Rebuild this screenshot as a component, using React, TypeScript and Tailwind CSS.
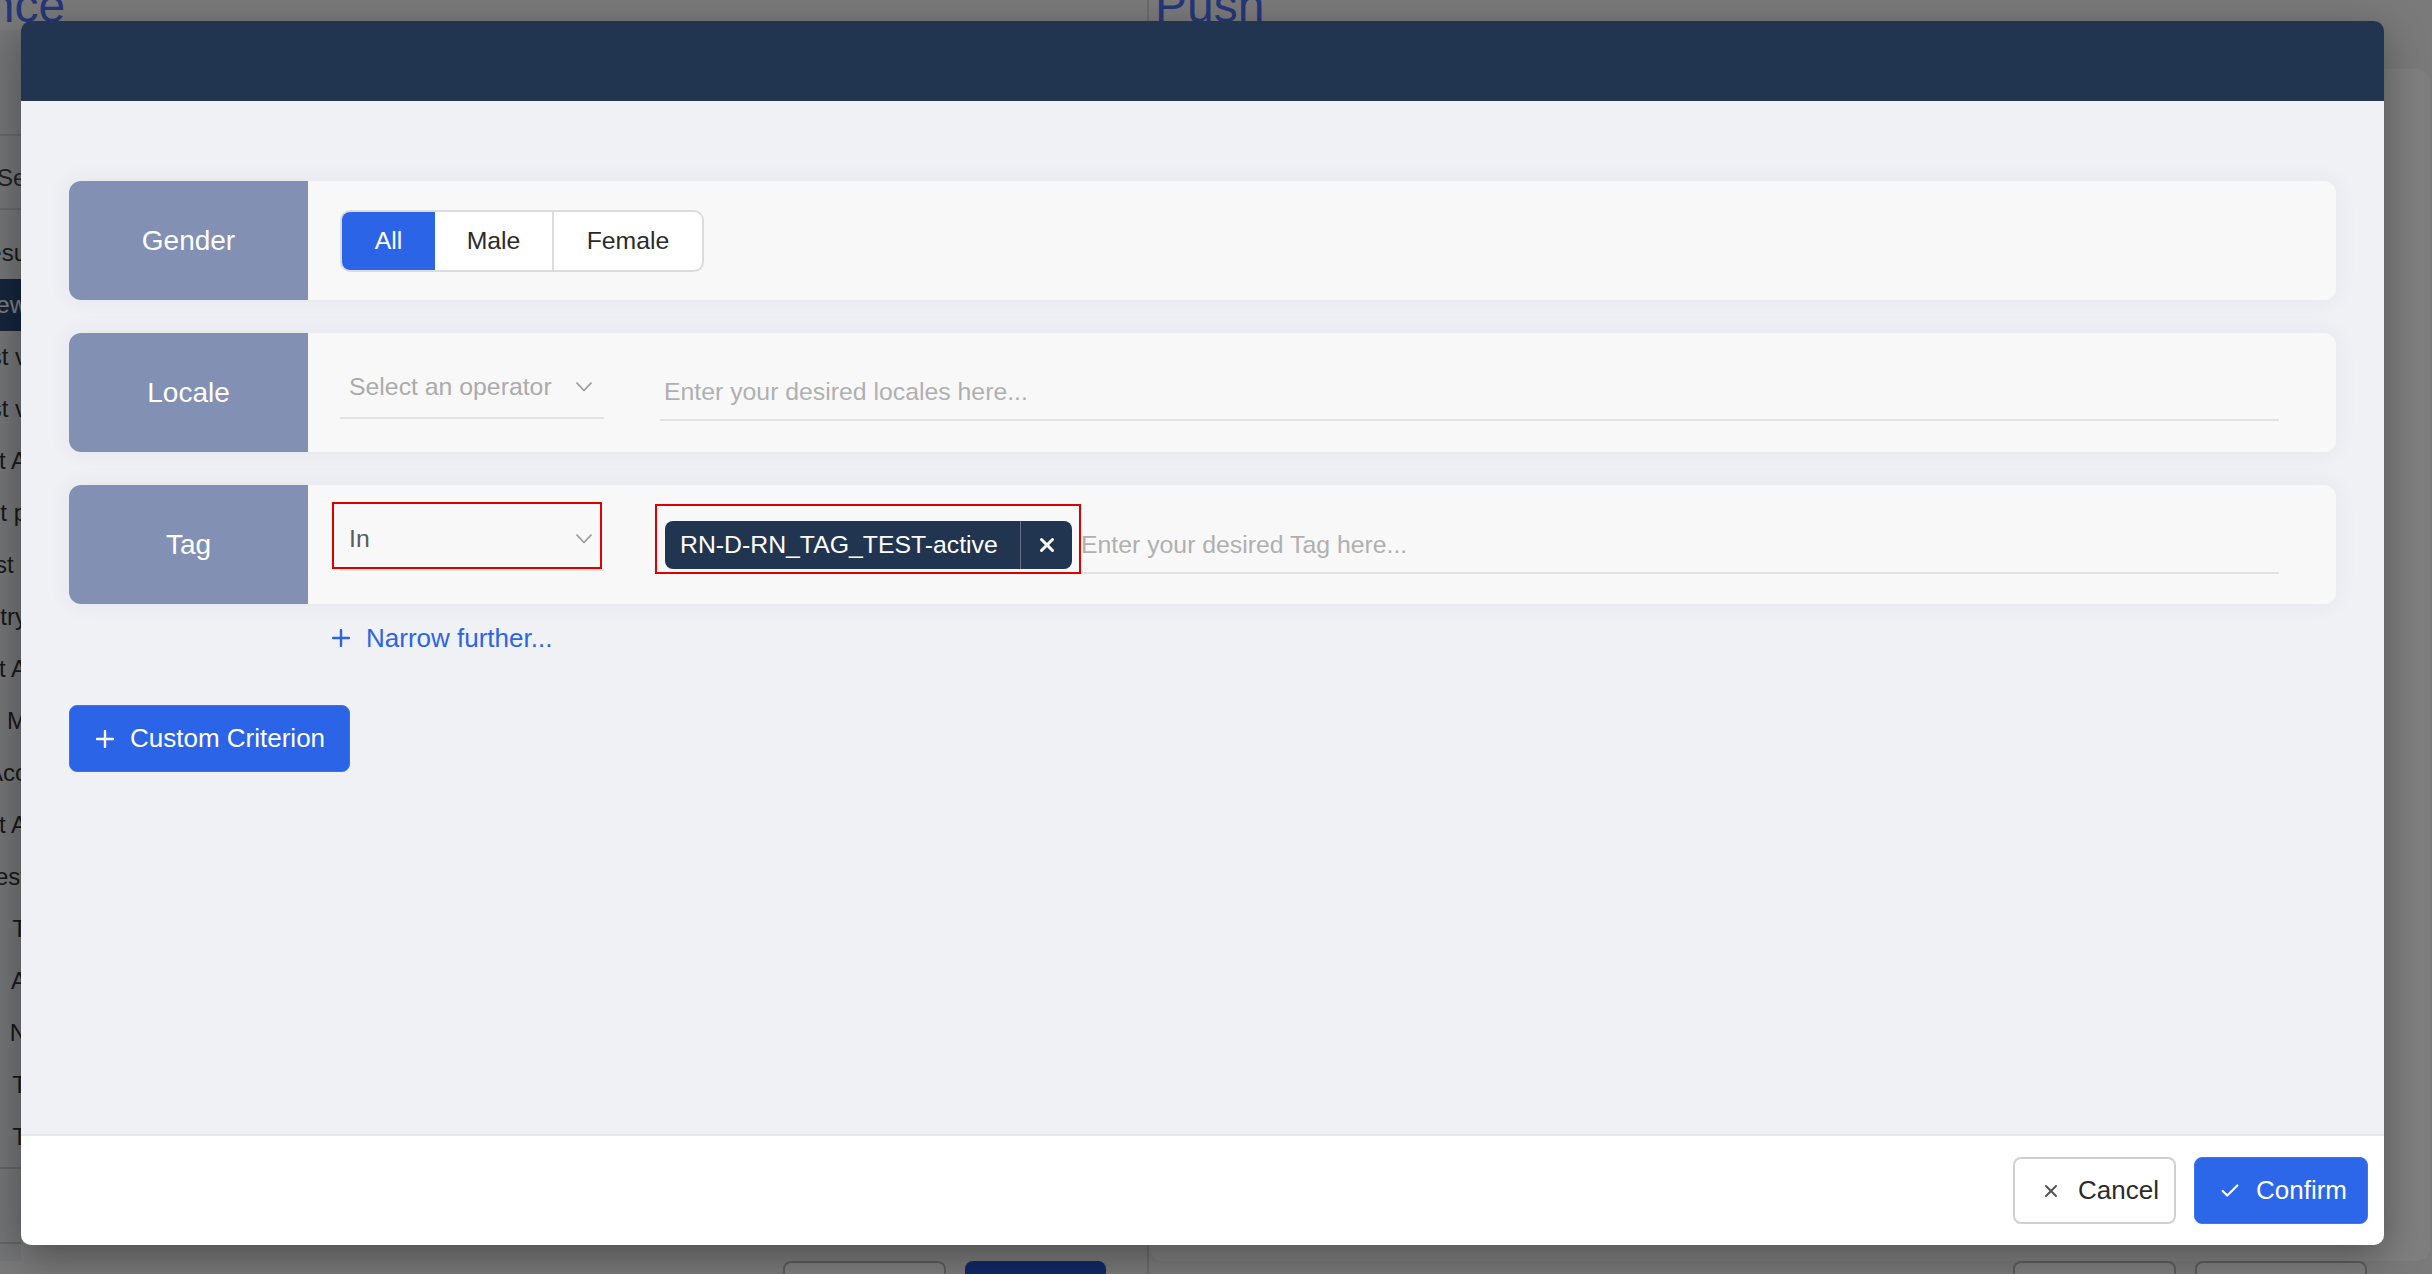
import { Check, X } from "lucide-react";

const sideItems = [
  { text: "Resu", active: false },
  { text: "New", active: true },
  { text: "Test v", active: false },
  { text: "Test v", active: false },
  { text: "Test A", active: false },
  { text: "Test p", active: false },
  { text: "Test I", active: false },
  { text: "Entry", active: false },
  { text: "Test A", active: false },
  { text: "M", active: false },
  { text: "Acc", active: false },
  { text: "Test A", active: false },
  { text: "Test", active: false },
  { text: " T", active: false },
  { text: " A", active: false },
  { text: "N", active: false },
  { text: " T", active: false },
  { text: " T", active: false },
];

function Chevron() {
  return (
    <svg width="16" height="10" viewBox="0 0 16 10" fill="none">
      <path d="M1 1.2l7 7.3 7-7.3" stroke="#9c9c9c" strokeWidth="1.7" strokeLinecap="round" strokeLinejoin="round" />
    </svg>
  );
}

function Plus({ color }: { color: string }) {
  return (
    <svg width="18" height="18" viewBox="0 0 18 18" fill="none">
      <path d="M9 1v16M1 9h16" stroke={color} strokeWidth="2.4" strokeLinecap="round" />
    </svg>
  );
}

function Row({ label, children, center }: { label: string; children: React.ReactNode; center?: boolean }) {
  return (
    <div className="flex h-[119px] overflow-hidden rounded-[12px] bg-[#f8f8f8] shadow-[0_0_24px_rgba(40,50,90,0.06)]">
      <div className="flex w-[239px] shrink-0 items-center justify-center bg-[#8290b3] text-[28px] text-white">
        {label}
      </div>
      <div className={`flex flex-1 pl-[32px] pr-[57px] ${center ? "items-center" : "items-start"}`}>{children}</div>
    </div>
  );
}

function OperatorSelect({ value, marked }: { value?: string; marked?: boolean }) {
  return (
    <div className="relative mt-[23px] flex h-[63px] w-[264px] shrink-0 items-center justify-between border-b-2 border-[#e2e2e2] pl-[9px] pr-[12px]">
      <span className={`text-[24.8px] ${value ? "text-[#5c5c5c]" : "text-[#ababab]"}`}>{value ?? "Select an operator"}</span>
      <Chevron />
      {marked && <div className="pointer-events-none absolute -left-[8px] -top-[6px] h-[67px] w-[270px] border-2 border-[#e00000]" />}
    </div>
  );
}

export default function App() {
  return (
    <div className="relative h-[1274px] w-full overflow-hidden bg-[#f4f5f7] font-['Liberation_Sans',Arial,sans-serif]">
      {/* page behind the dialog */}
      <div className="flex h-full">
        <div className="flex w-[1147px] shrink-0 flex-col">
          <div className="-ml-[135px] -mt-[18px] h-[48px] text-[48px] leading-none text-[#4a6ef5]">Audience</div>
          <div className="flex flex-1">
            <div className="flex w-[21px] shrink-0 flex-col overflow-hidden bg-[#e9eaee] pt-[104px]">
              <div className="h-[76px] border-y-2 border-[#d0d0d0] pt-[24px] text-[24px] text-[#444]">
                <div className="-ml-[3px]">Search</div>
              </div>
              <div className="mt-[17px] flex flex-col">
                {sideItems.map((it, i) => (
                  <div
                    key={i}
                    className={`flex h-[52px] items-center justify-end whitespace-nowrap text-[24px] ${
                      it.active ? "bg-[#2a4a78] text-white" : "text-[#333]"
                    }`}
                  >
                    <span className="-mr-[6px]">{it.text}</span>
                  </div>
                ))}
              </div>
              <div className="mt-[4px] h-[77px] border-y-2 border-[#c8c8c8]" />
            </div>
            <div className="flex-1" />
          </div>
          <div className="flex h-[13px] items-start gap-[19px] pl-[783px]">
            <div className="h-[67px] w-[163px] shrink-0 rounded-[8px] border-2 border-[#bbb] bg-white" />
            <div className="h-[67px] w-[141px] shrink-0 rounded-[8px] bg-[#2552cc]" />
          </div>
        </div>
        <div className="w-[2px] shrink-0 bg-[#d6d6d6]" />
        <div className="flex flex-1 flex-col">
          <div className="-mt-[18px] h-[48px] pl-[6px] text-[48px] leading-none text-[#4a6ef5]">Push</div>
          <div className="mr-[2px] mt-[39px] flex-1 rounded-[14px] bg-white" />
          <div className="flex h-[13px] items-start gap-[19px] pl-[864px]">
            <div className="h-[67px] w-[163px] shrink-0 rounded-[8px] border-2 border-[#bbb] bg-white" />
            <div className="h-[67px] w-[172px] shrink-0 rounded-[8px] border-2 border-[#bbb] bg-white" />
          </div>
        </div>
      </div>

      <div className="absolute inset-0 bg-black/50" />

      {/* dialog */}
      <div className="absolute left-[21px] top-[21px] flex h-[1224px] w-[2363px] flex-col overflow-hidden rounded-[10px] shadow-[0_12px_40px_rgba(0,0,0,0.35)]">
        <div className="h-[80px] shrink-0 bg-[#213550]" />
        <div className="flex flex-1 flex-col bg-[#f0f1f5] px-[48px] pt-[80px]">
          <div className="flex flex-col gap-[33px]">
            <Row label="Gender" center>
              <div className="flex h-[62px] overflow-hidden rounded-[10px] border-2 border-[#dcdcdc] bg-white text-[24.8px] text-[#2b2b2b]">
                <div className="flex w-[93px] items-center justify-center bg-[#2c64e8] text-white">All</div>
                <div className="flex w-[119px] items-center justify-center border-r-2 border-[#dcdcdc]">Male</div>
                <div className="flex w-[148px] items-center justify-center">Female</div>
              </div>
            </Row>
            <Row label="Locale">
              <OperatorSelect />
              <div className="ml-[56px] mt-[31px] flex h-[57px] flex-1 items-center border-b-2 border-[#e2e2e2] pl-[4px] text-[24.8px] text-[#b0b0b0]">
                Enter your desired locales here...
              </div>
            </Row>
            <Row label="Tag">
              <OperatorSelect value="In" marked />
              <div className="relative ml-[56px] mt-[32px] flex h-[57px] flex-1 items-center border-b-2 border-[#e2e2e2] pl-[5px] text-[24.8px]">
                <div className="flex h-[48px] items-center rounded-[8px] bg-[#213550] text-white">
                  <span className="w-[355px] whitespace-nowrap pl-[15px]">RN-D-RN_TAG_TEST-active</span>
                  <span className="flex h-full w-[52px] items-center justify-center border-l border-white/30">
                    <X size={22} strokeWidth={3.2} />
                  </span>
                </div>
                <span className="ml-[9px] text-[#b0b0b0]">Enter your desired Tag here...</span>
                <div className="pointer-events-none absolute -left-[5px] -top-[13px] h-[70px] w-[426px] border-2 border-[#e00000]" />
              </div>
            </Row>
          </div>
          <div className="ml-[263px] mt-[18px] flex h-[32px] items-center gap-[16px] text-[26px] text-[#2c64e8]">
            <Plus color="#2c64e8" />
            <span>Narrow further...</span>
          </div>
          <div className="mt-[51px] flex h-[67px] w-[281px] items-center gap-[16px] rounded-[8px] border border-[#3b73f2] bg-[#2c64e8] pl-[26px] text-[26px] text-white">
            <Plus color="#ffffff" />
            <span>Custom Criterion</span>
          </div>
        </div>
        <div className="flex h-[111px] shrink-0 items-center justify-end gap-[18px] border-t-2 border-[#e6e6e6] bg-white pr-[16px]">
          <div className="flex h-[67px] w-[163px] items-center gap-[17px] rounded-[8px] border-2 border-[#d0d0d0] bg-white pl-[26px] text-[26px] text-[#2b2b2b]">
            <X size={20} strokeWidth={2.4} className="text-[#555]" />
            <span>Cancel</span>
          </div>
          <div className="flex h-[67px] w-[174px] items-center gap-[15px] rounded-[8px] border border-[#3d78f3] bg-[#2c66e9] pl-[24px] text-[26px] text-white">
            <Check size={22} strokeWidth={2.4} />
            <span>Confirm</span>
          </div>
        </div>
      </div>
    </div>
  );
}
